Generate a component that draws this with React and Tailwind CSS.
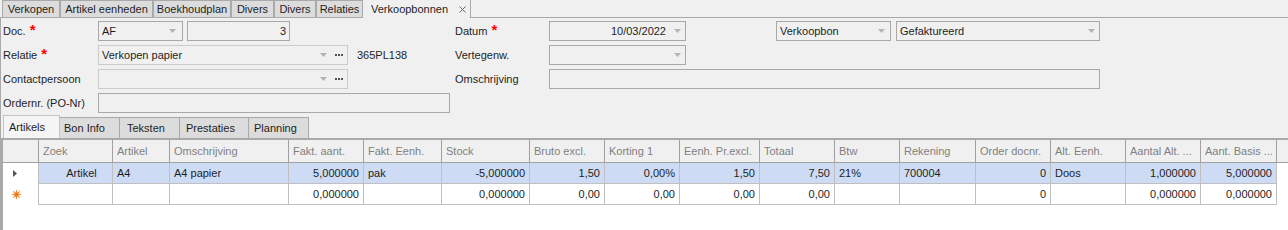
const Arrow = ({ className = "mr-[4px]" }) => (
  <svg width="7" height="4" viewBox="0 0 7 4" className={`shrink-0 ${className}`}>
    <path d="M0 0h7L3.5 4z" fill="#b4b4b4" />
  </svg>
);

const Dots = () => (
  <svg width="8" height="2" viewBox="0 0 8 2" className="mr-[4px] ml-[8px] shrink-0">
    <rect x="0" y="0" width="2" height="2" fill="#505050" />
    <rect x="3" y="0" width="2" height="2" fill="#505050" />
    <rect x="6" y="0" width="2" height="2" fill="#505050" />
  </svg>
);

const Star = () => <span className="ml-[4px] self-start mt-[1px] text-[15px] font-bold leading-none text-[#ff0000]">*</span>;

const Combo = ({ w, text, right, muted, dots, arrowClass }) => (
  <div
    className={`${w} h-[20px] flex items-center border bg-[#f0f0f0] ${
      muted ? "border-[#cbcbcb]" : "border-[#a8a8a8]"
    }`}
  >
    <span className={`flex-1 truncate ${right ? "text-right pr-[8px]" : "pl-[3px]"}`}>{text}</span>
    <Arrow className={arrowClass} />
    {dots && <Dots />}
  </div>
);

const Field = ({ w, text, right }) => (
  <div className={`${w} h-[20px] flex items-center border border-[#a8a8a8] bg-[#f0f0f0]`}>
    <span className={`flex-1 ${right ? "text-right pr-[3px]" : "pl-[3px]"}`}>{text}</span>
  </div>
);

const Label = ({ w, children, req }) => (
  <div className={`${w} h-[20px] flex items-center pl-[2px]`}>
    <span>{children}</span>
    {req && <Star />}
  </div>
);

const topTabs = [
  ["Verkopen", "w-[58px]"],
  ["Artikel eenheden", "w-[93px]"],
  ["Boekhoudplan", "w-[78px]"],
  ["Divers", "w-[43px]"],
  ["Divers", "w-[42px]"],
  ["Relaties", "w-[47px]"],
];

const subTabs = [
  ["Bon Info", "w-[60px] pl-[4px]"],
  ["Teksten", "w-[60px] pl-[7px]"],
  ["Prestaties", "w-[69px] pl-[6px]"],
  ["Planning", "w-[60px] pl-[5px]"],
];

const cols = [
  { title: "Zoek", w: "w-[74px]" },
  { title: "Artikel", w: "w-[57px]" },
  { title: "Omschrijving", w: "w-[119px]" },
  { title: "Fakt. aant.", w: "w-[75px]", right: true },
  { title: "Fakt. Eenh.", w: "w-[78px]" },
  { title: "Stock", w: "w-[88px]", right: true },
  { title: "Bruto excl.", w: "w-[75px]", right: true },
  { title: "Korting 1", w: "w-[75px]", right: true },
  { title: "Eenh. Pr.excl.", w: "w-[80px]", right: true },
  { title: "Totaal", w: "w-[75px]", right: true },
  { title: "Btw", w: "w-[65px]" },
  { title: "Rekening", w: "w-[76px]" },
  { title: "Order docnr.", w: "w-[75px]", right: true },
  { title: "Alt. Eenh.", w: "w-[75px]" },
  { title: "Aantal Alt. ...", w: "w-[75px]", right: true },
  { title: "Aant. Basis ...", w: "w-[76px]", right: true },
];

const rows = [
  ["Artikel", "A4", "A4 papier", "5,000000", "pak", "-5,000000", "1,50", "0,00%", "1,50", "7,50", "21%", "700004", "0", "Doos", "1,000000", "5,000000"],
  ["", "", "", "0,000000", "", "0,000000", "0,00", "0,00", "0,00", "0,00", "", "", "0", "", "0,000000", "0,000000"],
];

const RowArrow = () => (
  <svg width="4" height="7" viewBox="0 0 4 7" className="ml-[10px]">
    <path d="M0 0L4 3.5L0 7z" fill="#555" />
  </svg>
);

const NewRow = () => (
  <svg width="9" height="9" viewBox="0 0 9 9" className="ml-[9px]">
    <g stroke="#f4903a" strokeWidth="1.2">
      <path d="M4.5 0v9M0 4.5h9M1.3 1.3l6.4 6.4M7.7 1.3l-6.4 6.4" />
    </g>
    <circle cx="4.5" cy="4.5" r="2.2" fill="#f07a1a" />
  </svg>
);

export default function App() {
  return (
    <div className="w-[1288px] h-[230px] overflow-hidden bg-[#f0f0f0] text-[11px] text-[#1e1e1e] font-['Liberation_Sans',Arial,sans-serif] flex flex-col">
      <div className="flex h-[18px] shrink-0">
        <div className="w-[2px] border-b border-[#a9a9a9]" />
        {topTabs.map(([t, w], i) => (
          <div key={i} className={`${w} h-[18px] border border-[#a9a9a9] bg-[#dcdcdc] flex items-center justify-center`}>
            {t}
          </div>
        ))}
        <div className="w-[108px] h-[18px] flex items-center border-r border-[#a9a9a9] pl-[8px]">
          <span>Verkoopbonnen</span>
          <svg width="7" height="7" viewBox="0 0 7 7" className="ml-[11px]">
            <path d="M0.5 0.5l6 6M6.5 0.5l-6 6" stroke="#6a6a6a" strokeWidth="1" />
          </svg>
        </div>
        <div className="flex-1 border-b border-[#a9a9a9]" />
      </div>

      <div className="flex-1 flex flex-col border-l border-[#a9a9a9]">
        <div className="flex pt-[3px]">
          <div className="w-[449px] flex flex-col gap-[4px]">
            <div className="flex items-center">
              <Label w="w-[97px]" req>Doc.</Label>
              <Combo w="w-[85px]" text="AF" arrowClass="mr-[6px]" />
              <div className="ml-[4px]">
                <Field w="w-[103px]" text="3" right />
              </div>
            </div>
            <div className="flex items-center">
              <Label w="w-[97px]" req>Relatie</Label>
              <Combo w="w-[250px]" text="Verkopen papier" muted dots arrowClass="mr-0" />
              <span className="ml-[9px]">365PL138</span>
            </div>
            <div className="flex items-center">
              <Label w="w-[97px]">Contactpersoon</Label>
              <Combo w="w-[250px]" text="" muted dots arrowClass="mr-0" />
            </div>
            <div className="flex items-center">
              <Label w="w-[97px]">Ordernr. (PO-Nr)</Label>
              <Field w="w-[352px]" text="" />
            </div>
          </div>
          <div className="ml-[3px] flex flex-col gap-[4px]">
            <div className="flex items-center">
              <Label w="w-[96px]" req>Datum</Label>
              <Combo w="w-[137px]" text="10/03/2022" right />
              <div className="ml-[90px]">
                <Combo w="w-[115px]" text="Verkoopbon" arrowClass="mr-[5px]" />
              </div>
              <div className="ml-[5px]">
                <Combo w="w-[204px]" text="Gefaktureerd" />
              </div>
            </div>
            <div className="flex items-center">
              <Label w="w-[96px]">Vertegenw.</Label>
              <Combo w="w-[137px]" text="" />
            </div>
            <div className="flex items-center">
              <Label w="w-[96px]">Omschrijving</Label>
              <Field w="w-[551px]" text="" />
            </div>
          </div>
        </div>

        <div className="mt-[2px] flex items-end h-[23px] pl-[2px] shrink-0">
          <div className="w-[57px] h-[23px] border-t border-l border-r border-[#c4c4c4] bg-[#f5f5f5] flex items-center pl-[5px]">
            Artikels
          </div>
          {subTabs.map(([t, w]) => (
            <div key={t} className={`${w} h-[21px] border-t border-r border-[#a9a9a9] bg-[#dcdcdc] flex items-center`}>
              {t}
            </div>
          ))}
        </div>

        <div className="flex-1 bg-white border-t-2 border-l-2 border-[#a9a9a9]">
          <div className="flex h-[23px] bg-[#f0f0f0] border-b border-[#a0a0a0] text-[#808080]">
            <div className="w-[36px] border-r border-[#a0a0a0]" />
            {cols.map((c) => (
              <div key={c.title} className={`${c.w} shrink-0 border-r border-[#a0a0a0] flex items-center pl-[4px] whitespace-nowrap overflow-hidden`}>
                {c.title}
              </div>
            ))}
          </div>
          {rows.map((r, ri) => (
            <div key={ri} className="flex h-[21px]">
              <div className="w-[36px] border-r border-[#c0c0c0] flex items-center">
                {ri === 0 ? <RowArrow /> : <NewRow />}
              </div>
              {cols.map((c, ci) => (
                <div
                  key={ci}
                  className={`${c.w} shrink-0 border-r border-b border-[#c0c0c0] flex items-center whitespace-nowrap ${
                    ri === 0 ? "bg-[#cddcf4]" : "bg-white"
                  } ${
                    ci === 0 ? "justify-center pl-[12px]" : c.right ? "justify-end pr-[4px]" : "pl-[4px]"
                  }`}
                >
                  {r[ci]}
                </div>
              ))}
            </div>
          ))}
        </div>
      </div>
    </div>
  );
}
